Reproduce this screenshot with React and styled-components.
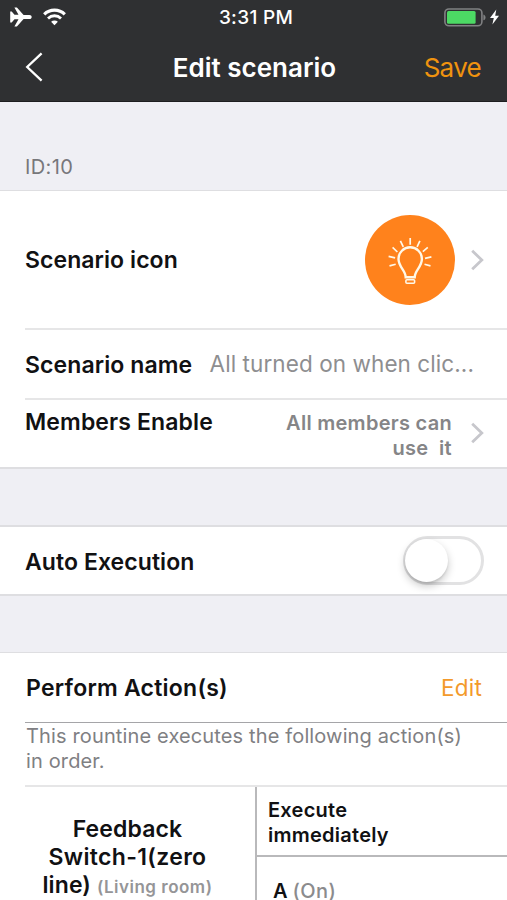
import styled, { createGlobalStyle } from "styled-components";

const GlobalStyle = createGlobalStyle`
  * {
    box-sizing: border-box;
  }
  body {
    margin: 0;
    background: #fff;
    font-family: Inter, "Liberation Sans", sans-serif;
    overflow: hidden;
  }
`;

const Screen = styled.div`
  width: 507px;
  height: 900px;
  overflow: hidden;
  background: #efeff4;
  color: #111113;
`;
const Header = styled.header`
  height: 102px;
  background: #2f3032;
  border-bottom: 1px solid #1d1e20;
`;
const StatusBar = styled.div`
  display: grid;
  grid-template-columns: 1fr auto 1fr;
  align-items: center;
  height: 34px;
  padding: 0 7px 0 9px;
`;
const StatusIcons = styled.div`
  display: flex;
  align-items: center;
  justify-content: ${(props) => (props.$end ? "flex-end" : "flex-start")};
  gap: ${(props) => (props.$end ? "3px" : "10px")};
`;
const Text = styled.span`
  font-size: ${(props) => props.$size}px;
  font-weight: ${(props) => props.$weight || 400};
  line-height: ${(props) => props.$line || 28}px;
  letter-spacing: ${(props) => props.$spacing || 0}px;
  color: ${(props) => props.$color || "inherit"};
  white-space: pre;
`;
const Clock = styled(Text)`
  padding: 1px 0 0 3px;
`;
const Label = styled(Text).attrs({ $size: 23, $weight: 600 })``;
const NavBar = styled.div`
  display: grid;
  grid-template-columns: 1fr auto 1fr;
  align-items: center;
  height: 67px;
  padding: 0 26px 0 25px;
`;
const NavTitle = styled(Text)`
  padding-left: 3px;
  color: #fff;
`;
const NavAction = styled(Text)`
  justify-self: end;
`;
const SectionTitle = styled.div`
  height: 88px;
  padding: 51px 25px 0;
`;
const Group = styled.section`
  background: #fff;
  border-top: ${(props) => props.$top || 2}px solid #dedee1;
  border-bottom: 2px solid #dedee1;
`;
const Gap = styled.div`
  height: 56px;
`;
const Row = styled.div`
  display: flex;
  justify-content: space-between;
  align-items: ${(props) => props.$align || "center"};
  height: ${(props) => props.$height}px;
  margin-left: 25px;
  padding: ${(props) => props.$padding || "0 23px 0 0"};
  border-bottom: ${(props) => (props.$line ? `${props.$lineWidth || 2}px solid ${props.$line}` : 0)};
`;
const RowEnd = styled.div`
  display: flex;
  align-items: center;
  gap: ${(props) => props.$gap || 16}px;
`;
const NameValue = styled(Text)`
  padding-bottom: 3px;
`;
const IconCircle = styled.div`
  width: 90px;
  height: 90px;
  border-radius: 50%;
  background: #ff821c;
`;
const Members = styled.div`
  display: flex;
  flex-direction: column;
  align-items: flex-end;
  margin: 3px 0 -3px;
`;
const Switch = styled.div`
  width: 81px;
  height: 49px;
  margin-bottom: 4px;
  border: 3px solid #e2e2e3;
  border-radius: 25px;
  background: #fff;
`;
const Knob = styled.div`
  width: 43px;
  height: 43px;
  margin-left: -1px;
  border-radius: 50%;
  background: #fff;
  box-shadow: 0 4px 8px rgba(0, 0, 0, 0.22), 0 2px 2px rgba(0, 0, 0, 0.08);
`;
const Note = styled.div`
  display: flex;
  flex-direction: column;
  height: 64px;
  margin-left: 25px;
  padding: 1px 0 0 1px;
  border-bottom: 2px solid #e6e6e7;
`;
const ActionTable = styled.div`
  display: grid;
  grid-template-columns: 232px 1fr;
  height: 130px;
  margin-left: 25px;
`;
const Device = styled.div`
  display: flex;
  flex-direction: column;
  align-items: center;
  padding: 28px 25px 0 0;
  border-right: 2px solid #b9b9bb;
`;
const Steps = styled.div`
  display: flex;
  flex-direction: column;
`;
const StepHead = styled.div`
  display: flex;
  flex-direction: column;
  height: 70px;
  padding: 11px 0 0 11px;
  border-bottom: 2px solid #b9b9bb;
`;
const Step = styled.div`
  padding: 20px 0 0 16px;
`;

function Airplane() {
  return (
    <svg width="24" height="20" viewBox="0 0 24 20" fill="#fff">
      <path d="M1.2 4.4h1.5l2.8 3.4h4L5.4.6h2.5l6.7 7.3h5.8c1.4 0 2.3.9 2.3 2.1s-.9 2.1-2.3 2.1h-5.8l-6.7 7.3H5.4l4.1-7.2h-4l-2.8 3.4H1.2z" />
    </svg>
  );
}

function Wifi() {
  return (
    <svg width="23" height="18" viewBox="0 0 23 18" fill="none" stroke="#fff" strokeWidth="3.2">
      <path d="M1.2 6.3a14.8 14.8 0 0 1 20.6 0" />
      <path d="M5 10.4a9.3 9.3 0 0 1 13 0" strokeWidth="2.8" />
      <path d="M11.5 17.2l-3.4-3.4a4.9 4.9 0 0 1 6.8 0z" fill="#fff" stroke="none" />
    </svg>
  );
}

function Battery() {
  return (
    <svg width="42" height="19" viewBox="0 0 42 19">
      <rect x="0.9" y="1" width="37" height="16.8" rx="4" fill="none" stroke="#808183" strokeWidth="1.6" />
      <rect x="3" y="3.1" width="28.6" height="12.6" rx="1.5" fill="#4cd964" />
      <path d="M39.4 6.5c1.5.5 2.1 1.6 2.1 2.9s-.6 2.4-2.1 2.9z" fill="#808183" />
    </svg>
  );
}

function Bolt() {
  return (
    <svg width="11" height="16" viewBox="0 0 11 16" fill="#fff">
      <path d="M7.3.5L1 9h3.8L3.4 15.5 10 6.8H6.2z" />
    </svg>
  );
}

function Back() {
  return (
    <svg width="19" height="32" viewBox="0 0 19 32" fill="none" stroke="#fff" strokeWidth="2.3">
      <path d="M16.6 1.4L2.2 15l14.4 13.6" />
    </svg>
  );
}

function Chevron() {
  return (
    <svg width="13" height="22" viewBox="0 0 13 22" fill="none" stroke="#c7c7cc" strokeWidth="2.8">
      <path d="M1.2 1.8L10.8 11 1.2 20.2" />
    </svg>
  );
}

function Bulb() {
  return (
    <svg width="90" height="90" viewBox="0 0 90 90" fill="none" stroke="#fff8e8" strokeWidth="2.4">
      <path d="M40.7 62.2c0-6.8-7.2-10.3-7.2-18.2a11.7 11.7 0 0 1 23.4 0c0 7.9-7.2 11.4-7.2 18.2z" />
      <rect x="40.9" y="64.8" width="8.7" height="3.5" rx="1" strokeWidth="1.6" />
      <path
        strokeWidth="1.7"
        d="M45.2 23v6.8M35.4 25.8l2.9 6M54.9 25.8l-2.8 6M27.6 32.4l4.8 4.6M62.8 32.4l-5 4.2M23.6 41.4l6.5 1.5M66.4 41.9l-6.4 1.4M24.5 50.9l6.2-1.6M65.5 50.9l-6-1.6"
      />
    </svg>
  );
}

function App() {
  return (
    <>
      <GlobalStyle />
      <Screen>
        <Header>
          <StatusBar>
            <StatusIcons>
              <Airplane />
              <Wifi />
            </StatusIcons>
            <Clock $size={19} $weight={500} $spacing={0.3} $color="#fff">3:31 PM</Clock>
            <StatusIcons $end>
              <Battery />
              <Bolt />
            </StatusIcons>
          </StatusBar>
          <NavBar>
            <Back />
            <NavTitle $size={26} $weight={600}>Edit scenario</NavTitle>
            <NavAction $size={26} $spacing={-0.7} $color="#f0930f">Save</NavAction>
          </NavBar>
        </Header>

        <SectionTitle>
          <Text $size={20} $spacing={0.4} $color="#77777b">ID:10</Text>
        </SectionTitle>

        <Group $top={1}>
          <Row $height={139} $line="#e6e6e7" $padding="0 23px 0 0">
            <Label $spacing={0.07}>Scenario icon</Label>
            <RowEnd>
              <IconCircle>
                <Bulb />
              </IconCircle>
              <Chevron />
            </RowEnd>
          </Row>
          <Row $height={70} $line="#e6e6e7" $padding="2px 33px 0 0">
            <Label $spacing={0.1}>Scenario name</Label>
            <NameValue $size={22.5} $spacing={0.08} $color="#8e8e90">All turned on when clic...</NameValue>
          </Row>
          <Row $height={67} $align="flex-start" $padding="8px 23px 0 0">
            <Label $spacing={0.12}>Members Enable</Label>
            <RowEnd $gap={19}>
              <Members>
                <Text $size={20} $weight={600} $line={25} $spacing={0.28} $color="#858587">All members can</Text>
                <Text $size={20} $weight={600} $line={25} $spacing={0.3} $color="#858587">use  it</Text>
              </Members>
              <Chevron />
            </RowEnd>
          </Row>
        </Group>
        <Gap />

        <Group>
          <Row $height={67} $padding="3px 23px 0 0">
            <Label $spacing={0.08}>Auto Execution</Label>
            <Switch>
              <Knob />
            </Switch>
          </Row>
        </Group>
        <Gap />

        <Group $top={1}>
          <Row $height={70} $line="#a5a5a8" $lineWidth={1} $padding="1px 25px 0 1px">
            <Label $spacing={0.24}>Perform Action(s)</Label>
            <Text $size={22.5} $spacing={0.2} $color="#f39a2b">Edit</Text>
          </Row>
          <Note>
            <Text $size={20} $line={25} $spacing={0.14} $color="#7f8083">This rountine executes the following action(s)</Text>
            <Text $size={20} $line={25} $spacing={0.14} $color="#7f8083">in order.</Text>
          </Note>
          <ActionTable>
            <Device>
              <Label $spacing={0.12}>Feedback</Label>
              <Label $spacing={0.34}>Switch-1(zero</Label>
              <Label $spacing={0.1}>
                line) <Text $size={17} $weight={600} $spacing={0.5} $color="#959597">(Living room)</Text>
              </Label>
            </Device>
            <Steps>
              <StepHead>
                <Text $size={20} $weight={600} $line={25} $spacing={0.25}>Execute</Text>
                <Text $size={20} $weight={600} $line={25} $spacing={0.25}>immediately</Text>
              </StepHead>
              <Step>
                <Text $size={20} $weight={600}>
                  A <Text $size={20} $weight={500} $spacing={0.4} $color="#8b8b8d">(On)</Text>
                </Text>
              </Step>
            </Steps>
          </ActionTable>
        </Group>
      </Screen>
    </>
  );
}

export default App;
